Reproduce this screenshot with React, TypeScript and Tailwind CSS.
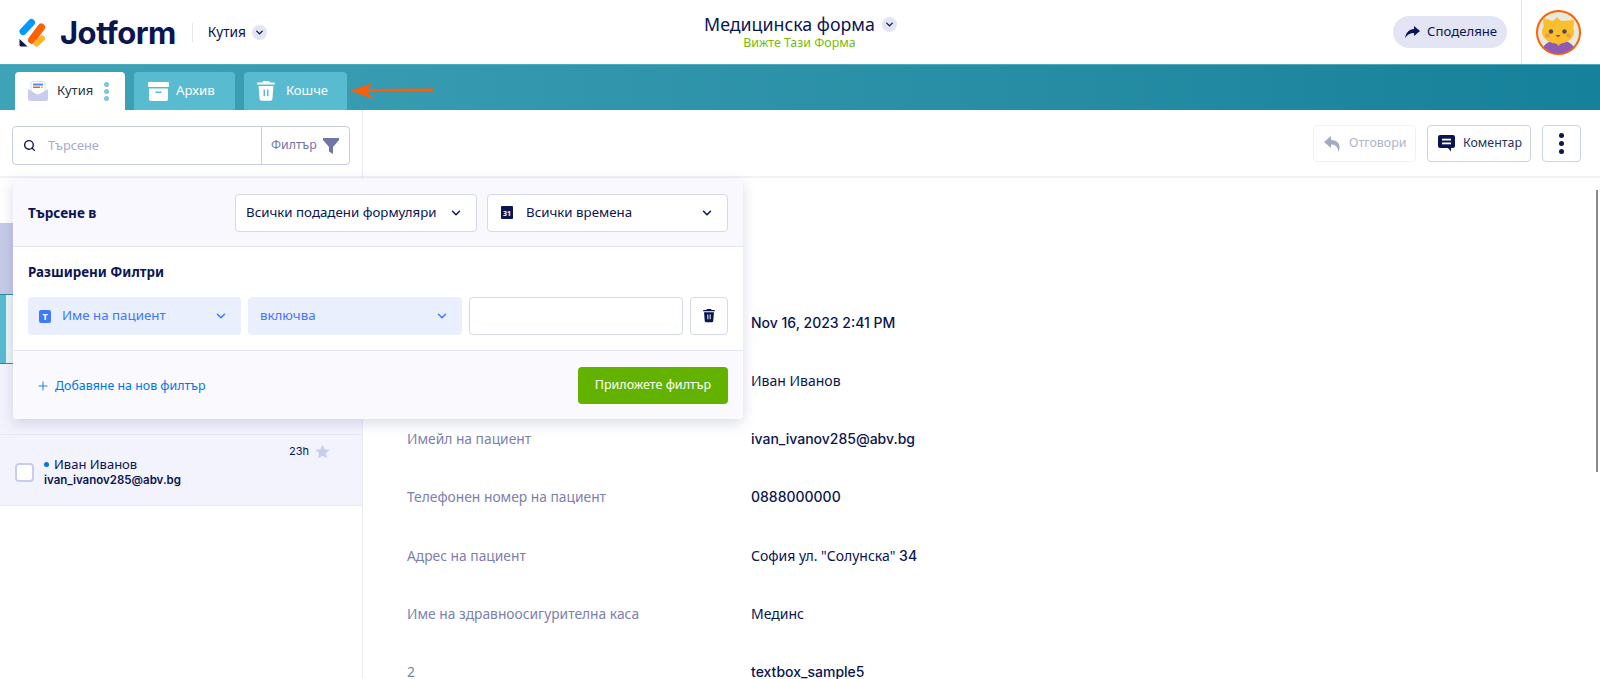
import { ChevronDown, Plus, Search } from 'lucide-react'

const rows = [
  { label: 'Дата на подаване', value: 'Nov 16, 2023 2:41 PM', font: 'latin' },
  { label: 'Име на пациент', value: 'Иван Иванов', font: 'noto' },
  { label: 'Имейл на пациент', value: 'ivan_ivanov285@abv.bg', font: 'latin' },
  { label: 'Телефонен номер на пациент', value: '0888000000', font: 'latin' },
  { label: 'Адрес на пациент', value: 'София ул. "Солунска"', suffix: ' 34', font: 'noto' },
  { label: 'Име на здравноосигурителна каса', value: 'Мединс', font: 'noto' },
  { label: '2', value: 'textbox_sample5', font: 'latin' },
]

function Logo() {
  return (
    <svg width="27" height="29" viewBox="0 0 27 29" fill="none">
      <path d="M4 13.5 12.5 4.5" stroke="#0099ff" strokeWidth="7" strokeLinecap="round" />
      <path d="M12.8 22 22.3 9.2" stroke="#ff6100" strokeWidth="7.5" strokeLinecap="round" />
      <path d="M17.5 25.5 23 20.5" stroke="#ffb629" strokeWidth="6" strokeLinecap="round" />
      <path d="M.5 21 8.5 28.5H2A1.5 1.5 0 0 1 .5 27Z" fill="#0a1551" />
    </svg>
  )
}

function Avatar() {
  return (
    <svg width="45" height="45" viewBox="0 0 45 45">
      <defs>
        <clipPath id="av">
          <circle cx="22.5" cy="22.5" r="21" />
        </clipPath>
      </defs>
      <circle cx="22.5" cy="22.5" r="21.5" fill="#e8eadf" stroke="#ff6100" strokeWidth="2" />
      <g clipPath="url(#av)">
        <path d="M5 45C6 34 13 30 22.5 30S39 34 40 45Z" fill="#8e5bb5" />
        <path d="M18 31h9l-4.5 5Z" fill="#f4b92e" />
        <path d="M7 8 17 11 21 7 25 11 38 10 37 24H8Z" fill="#fbbf2d" />
        <ellipse cx="22" cy="22" rx="16" ry="11.5" fill="#fbbf2d" />
        <circle cx="15" cy="21.5" r="2.2" fill="#4a4a5e" />
        <circle cx="28.5" cy="21.5" r="2.2" fill="#4a4a5e" />
        <circle cx="11.5" cy="25.5" r="2.3" fill="#f79a3e" />
        <circle cx="32.5" cy="25.5" r="2.3" fill="#f79a3e" />
        <path d="M19.5 25c1.5 2.5 3.5 2.5 5 0Z" fill="#b5432c" />
      </g>
    </svg>
  )
}

function ChevronBadge() {
  return (
    <span className="flex h-[15px] w-[15px] items-center justify-center rounded-full bg-[#e3e5f5]">
      <ChevronDown size={11} strokeWidth={3} className="text-[#0a1551]" />
    </span>
  )
}

function Envelope() {
  return (
    <svg width="20" height="20" viewBox="0 0 20 20">
      <rect x="3" y="0.5" width="14" height="13" rx="2" fill="#fff" stroke="#d7dbf0" />
      <rect x="5" y="2.5" width="10" height="2" fill="#4c8dff" />
      <rect x="5" y="5.5" width="7" height="1.5" fill="#ff6100" />
      <rect x="13" y="5.5" width="2" height="1.5" fill="#ffb629" />
      <path d="M0 8 10 14 20 8V18A2 2 0 0 1 18 20H2A2 2 0 0 1 0 18Z" fill="#c8cdec" />
    </svg>
  )
}

function ArchiveIcon() {
  return (
    <svg width="21" height="19" viewBox="0 0 21 19" fill="#fff">
      <rect width="21" height="5" rx="1" />
      <path d="M1 6.5H20V17A2 2 0 0 1 18 19H3A2 2 0 0 1 1 17ZM7.5 9.5V11H13.5V9.5Z" fillRule="evenodd" />
    </svg>
  )
}

function TrashIcon({ color = '#fff', size = 18 }: { color?: string; size?: number }) {
  return (
    <svg width={size} height={size * 1.1} viewBox="0 0 18 20" fill={color}>
      <path d="M6 0H12L13 1.5H17A1 1 0 0 1 18 2.5V3.5H0V2.5A1 1 0 0 1 1 1.5H5Z" />
      <path
        d="M1.5 5H16.5L15.5 18A2 2 0 0 1 13.5 20H4.5A2 2 0 0 1 2.5 18ZM6.5 8.5V15.5H8V8.5ZM10 8.5V15.5H11.5V8.5Z"
        fillRule="evenodd"
      />
    </svg>
  )
}

function Tabs() {
  return (
    <div className="relative flex h-[46px] shrink-0 items-end gap-[9px] border-t border-[#4cabbd] bg-gradient-to-r from-[#3fa3b7] to-[#15819a] pl-[15px]">
      <div className="flex h-[38px] w-[110px] items-center rounded-t-[4px] bg-white pl-[13px] text-[#2b3245]">
        <Envelope />
        <span className="ml-[9px] text-[13px]">Кутия</span>
        <span className="ml-[11px] flex flex-col gap-[2px]">
          <i className="h-[5px] w-[5px] rounded-full bg-[#7fc6d7]" />
          <i className="h-[5px] w-[5px] rounded-full bg-[#7fc6d7]" />
          <i className="h-[5px] w-[5px] rounded-full bg-[#7fc6d7]" />
        </span>
      </div>
      <div className="flex h-[38px] w-[101px] items-center gap-[7px] rounded-t-[4px] bg-[#58bbd0] pl-[14px] text-white">
        <ArchiveIcon />
        <span className="text-[13.3px]">Архив</span>
      </div>
      <div className="flex h-[38px] w-[103px] items-center gap-[11px] rounded-t-[4px] bg-[#58bbd0] pl-[13px] text-white">
        <TrashIcon />
        <span className="text-[13px]">Кошче</span>
      </div>
      <svg className="absolute left-[350px] top-[17px]" width="84" height="18" viewBox="0 0 84 18">
        <path d="M0 8.5 23 1 18 7 83 6.5V9.5L18 10 23 17Z" fill="#f4600c" />
      </svg>
    </div>
  )
}

function SelectBox({
  children,
  className,
  chevron = 'text-[#0a1551]',
}: {
  children: React.ReactNode
  className: string
  chevron?: string
}) {
  return (
    <div className={`flex h-[38px] items-center justify-between rounded-[4px] pr-[13px] text-[13.3px] ${className}`}>
      <span className="flex items-center">{children}</span>
      <ChevronDown size={14} strokeWidth={2.5} className={chevron} />
    </div>
  )
}

function FilterPopover() {
  return (
    <div className="absolute left-[13px] top-[179px] z-10 w-[730px] rounded-[4px] bg-white shadow-[0_4px_14px_rgba(70,80,130,0.2)]">
      <div className="flex h-[68px] items-center justify-between rounded-t-[4px] border-b border-[#e3e5f5] bg-[#f8f8fe] px-[15px]">
        <span className="mt-[2px] text-[13.5px] font-bold text-[#0a1551]">Търсене в</span>
        <div className="flex gap-[10px]">
          <SelectBox className="w-[242px] border border-[#d5d8ee] bg-white pl-[10px] text-[#0a1551]">
            Всички подадени формуляри
          </SelectBox>
          <SelectBox className="w-[241px] border border-[#d5d8ee] bg-white pl-[13px] text-[#0a1551]">
            <span className="mr-[13px] flex h-[13px] w-[12px] items-center justify-center rounded-[1px] bg-[#0a1551] pt-[2px] text-[7px] font-bold leading-none text-white">
              31
            </span>
            Всички времена
          </SelectBox>
        </div>
      </div>
      <div className="h-[104px] border-b border-[#e3e5f5] px-[15px] pt-[15px]">
        <div className="text-[13.4px] font-bold leading-[20px] text-[#0a1551]">Разширени Филтри</div>
        <div className="mt-[15px] flex gap-[7px]">
          <SelectBox className="w-[213px] bg-[#e9effd] pl-[11px] text-[#4277ff]" chevron="text-[#4277ff]">
            <span className="mr-[11px] flex h-[13px] w-[12px] items-center justify-center rounded-[2px] bg-[#4277ff] text-[9px] font-bold leading-none text-white">
              T
            </span>
            Име на пациент
          </SelectBox>
          <SelectBox className="w-[214px] bg-[#e9effd] pl-[12px] text-[#4277ff]" chevron="text-[#4277ff]">
            включва
          </SelectBox>
          <div className="h-[38px] w-[214px] rounded-[4px] border border-[#d5d8ee] bg-white" />
          <div className="flex h-[38px] w-[38px] items-center justify-center rounded-[4px] border border-[#d5d8ee] bg-white">
            <TrashIcon color="#0a1551" size={12} />
          </div>
        </div>
      </div>
      <div className="flex h-[68px] items-center justify-between rounded-b-[4px] bg-[#fafafe] pl-[23px] pr-[15px]">
        <span className="mt-[2px] flex items-center gap-[5px] text-[12.4px] text-[#0075e3]">
          <Plus size={14} strokeWidth={1.5} />
          Добавяне на нов филтър
        </span>
        <button className="h-[37px] w-[150px] rounded-[4px] bg-[#64b200] text-[12.5px] text-white">
          Приложете филтър
        </button>
      </div>
    </div>
  )
}

function Sidebar() {
  return (
    <aside className="w-[363px] shrink-0 border-r border-[#eaebf2]">
      <div className="h-[68px] border-b-2 border-[#f1f1f6] px-[12px] pt-[16px]">
        <div className="flex h-[39px] w-[338px] items-center rounded-[4px] border border-[#c8cce0]">
          <div className="flex flex-1 items-center pl-[10px]">
            <Search size={13} strokeWidth={2.5} className="text-[#0a1551]" />
            <span className="ml-[12px] text-[12.8px] text-[#a8abc6]">Търсене</span>
          </div>
          <div className="flex h-full w-[88px] items-center gap-[6px] border-l border-[#c8cce0] pl-[9px] text-[12.3px] text-[#6f76a7]">
            Филтър
            <svg width="16" height="16" viewBox="0 0 16 16" fill="#6f76a7">
              <path d="M0 0H16V2L10 9V16L6 13.5V9L0 2Z" />
            </svg>
          </div>
        </div>
      </div>
      <div className="h-[45px]" />
      <div className="h-[71px] bg-[#c5cae6]" />
      <div className="h-[70px] border-y border-[#2d8ba0] bg-[#eaf5f7]">
        <div className="h-full w-[6px] bg-[#58bbd0]" />
      </div>
      <div className="h-[71px] border-b border-[#e6e7f3] bg-[#f3f3fd]" />
      <div className="relative flex h-[71px] items-center border-b border-[#e6e7f3] bg-[#f3f3fd] pl-[15px]">
        <span className="mt-[4px] h-[19px] w-[19px] rounded-[4px] border-2 border-[#c8cdec] bg-white" />
        <div className="ml-[10px] mt-[4px] text-[#0a1551]">
          <div className="flex items-center text-[13px] leading-[15px]">
            <i className="mr-[5px] h-[5px] w-[5px] rounded-full bg-[#0075e3]" />
            Иван Иванов
          </div>
          <div className="font-['Inter',sans-serif] text-[11.5px] font-semibold leading-[16px]">
            ivan_ivanov285@abv.bg
          </div>
        </div>
        <div className="absolute right-[32px] top-[8px] flex items-center gap-[6px]">
          <span className="font-['Inter',sans-serif] text-[11px] text-[#0a1551]">23h</span>
          <svg width="15" height="15" viewBox="0 0 24 24" fill="#c8cdec">
            <path d="M12 1l3.4 7.3 8 1-5.9 5.4 1.600 7.900L12 18.700l-7.100 3.900 1.600-7.900L.6 9.300l8-1z" />
          </svg>
        </div>
      </div>
    </aside>
  )
}

function Toolbar() {
  return (
    <div className="flex h-[68px] items-start justify-end gap-[11px] border-b-2 border-[#f1f1f6] pr-[19px] pt-[15px] text-[12.4px]">
      <div className="flex h-[37px] w-[103px] items-center rounded-[4px] border border-[#f0f1fa] pl-[10px] text-[#b0b3c9]">
        <svg className="mr-[8px]" width="17" height="16" viewBox="0 0 17 16" fill="#a6a9c4">
          <path d="M7 0 0 6 7 12V8.5C11 8.5 13.5 10 14.5 16 17.5 9 14 4 7 4Z" />
        </svg>
        Отговори
      </div>
      <div className="flex h-[37px] w-[104px] items-center rounded-[4px] border border-[#cdd2ec] pl-[10px] text-[#25305f]">
        <svg className="mr-[8px]" width="17" height="17" viewBox="0 0 17 17">
          <path d="M2 0H15A2 2 0 0 1 17 2V11A2 2 0 0 1 15 13H13V16.5L10 13H2A2 2 0 0 1 0 11V2A2 2 0 0 1 2 0Z" fill="#0a1551" />
          <rect x="4" y="3.7" width="9" height="1.8" fill="#fff" />
          <rect x="4" y="7.5" width="9" height="1.8" fill="#fff" />
        </svg>
        Коментар
      </div>
      <div className="flex h-[37px] w-[39px] flex-col items-center justify-center gap-[3px] rounded-[4px] border border-[#cdd2ec]">
        <i className="h-[5px] w-[5px] rounded-full bg-[#0a1551]" />
        <i className="h-[5px] w-[5px] rounded-full bg-[#0a1551]" />
        <i className="h-[5px] w-[5px] rounded-full bg-[#0a1551]" />
      </div>
    </div>
  )
}

function Details() {
  return (
    <main className="relative flex-1">
      <Toolbar />
      <div className="pl-[44px] pt-[134.5px]">
        {rows.map((row) => (
          <div key={row.label} className="flex h-[58.3px] items-start">
            <span className="w-[344px] shrink-0 text-[13.8px] leading-[20px] text-[#7c80ac]">{row.label}</span>
            <span
              className={
                row.font === 'latin'
                  ? "font-['Inter',sans-serif] text-[14px] font-medium leading-[20px] text-[#0a1551]"
                  : 'text-[14px] leading-[20px] text-[#0a1551]'
              }
            >
              {row.value}
              {row.suffix && <span className="font-['Inter',sans-serif] font-medium">{row.suffix}</span>}
            </span>
          </div>
        ))}
      </div>
      <div className="absolute right-[2px] top-[80px] h-[282px] w-[2px] bg-[#8a8a8a]" />
    </main>
  )
}

export default function App() {
  return (
    <div className="relative flex h-[679px] flex-col overflow-hidden bg-white font-['Noto_Sans',sans-serif]">
      <header className="relative flex h-[64px] shrink-0 items-center justify-between">
        <div className="flex items-center pl-[19px]">
          <Logo />
          <span className="ml-[14px] font-['Inter',sans-serif] text-[31px] font-bold leading-none tracking-[-0.5px] text-[#0a1551]">
            Jotform
          </span>
          <span className="ml-[16px] h-[19px] w-px bg-[#e6e7f0]" />
          <span className="ml-[15px] text-[13.7px] text-[#0a1551]">Кутия</span>
          <span className="ml-[6px]">
            <ChevronBadge />
          </span>
        </div>
        <div className="absolute left-[704px] top-[12px] flex flex-col items-center">
          <div className="flex items-center gap-[7px] text-[17.8px] leading-[24px] text-[#0a1551]">
            Медицинска форма
            <ChevronBadge />
          </div>
          <div className="-ml-[2px] -mt-px text-[12.4px] leading-[16px] text-[#78bb07]">Вижте Тази Форма</div>
        </div>
        <div className="flex h-full items-center">
          <div className="flex h-[32px] w-[114px] items-center gap-[7px] rounded-full bg-[#e3e5f5] pl-[12px] text-[13.2px] text-[#0a1551]">
            <svg width="15" height="12" viewBox="0 0 15 12" fill="#0a1551">
              <path d="M9 0 15 5 9 10V7C5 7 2.5 8.5 0 12 .8 7 4 3 9 3Z" />
            </svg>
            Споделяне
          </div>
          <div className="ml-[14px] flex h-full w-[79px] items-center border-l border-[#e6e7f0] pl-[14px]">
            <Avatar />
          </div>
        </div>
      </header>
      <Tabs />
      <div className="flex min-h-0 flex-1 overflow-hidden">
        <Sidebar />
        <Details />
      </div>
      <FilterPopover />
    </div>
  )
}
